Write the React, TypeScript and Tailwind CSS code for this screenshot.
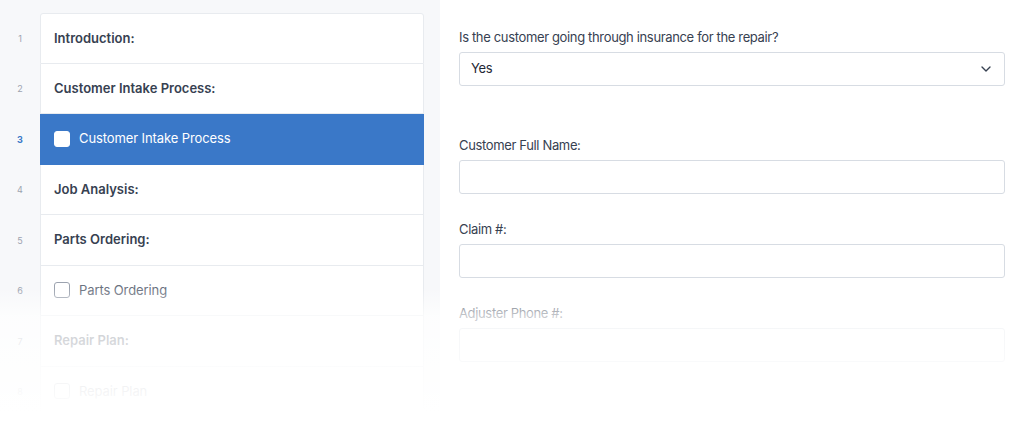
import { ChevronDown } from 'lucide-react';

const rows = [
  { n: 1, label: 'Introduction:', kind: 'heading' },
  { n: 2, label: 'Customer Intake Process:', kind: 'heading' },
  { n: 3, label: 'Customer Intake Process', kind: 'check', active: true },
  { n: 4, label: 'Job Analysis:', kind: 'heading' },
  { n: 5, label: 'Parts Ordering:', kind: 'heading' },
  { n: 6, label: 'Parts Ordering', kind: 'check' },
  { n: 7, label: 'Repair Plan:', kind: 'heading' },
  { n: 8, label: 'Repair Plan', kind: 'check' },
];

function App() {
  return (
    <div className="relative flex h-[437px] w-full overflow-hidden bg-white font-['Inter','Liberation_Sans',sans-serif] antialiased">
      {/* checklist */}
      <div className="w-[440px] shrink-0 bg-[#f7f8fa] pt-[13px]">
        {rows.map((row, i) => (
          <div key={row.n} className="flex h-[50.5px]">
            <div
              className={`flex w-[40px] items-center justify-center text-[9px] ${
                row.active ? 'font-bold text-[#3a78c8]' : 'text-[#9ca3af]'
              }`}
            >
              {row.n}
            </div>
            <div
              className={`flex w-[384px] items-center border-x border-b px-[13px] ${
                i === 0 ? 'rounded-t-[3px] border-t' : ''
              } ${row.active ? 'border-[#3a78c8] bg-[#3a78c8]' : 'border-[#e8ebef] bg-white'}`}
            >
              {row.kind === 'check' ? (
                <div className="flex items-center gap-[9px]">
                  <span
                    className={`h-[16px] w-[16px] rounded-[3px] border ${
                      row.active ? 'border-white bg-white' : 'border-[#9ca3af] bg-white'
                    }`}
                  />
                  <span className={`text-[13px] tracking-[-0.1px] ${row.active ? 'text-white' : 'text-[#6b7280]'}`}>
                    {row.label}
                  </span>
                </div>
              ) : (
                <span className="text-[13px] font-semibold text-[#374151]">{row.label}</span>
              )}
            </div>
          </div>
        ))}
      </div>

      {/* form */}
      <div className="flex-1 px-[19px] pt-[27px] text-[13px] tracking-[-0.35px] text-[#374151]">
        <label className="block h-[20px] leading-[20px]">Is the customer going through insurance for the repair?</label>
        <div className="mt-[5px] flex h-[34px] items-center justify-between rounded-[3px] border border-[#d7dce3] bg-white pl-[11px] pr-[10px] text-[#1f2937]">
          <span>Yes</span>
          <ChevronDown size={16} strokeWidth={2} className="text-[#374151]" />
        </div>

        <label className="mt-[49px] block h-[20px] leading-[20px]">Customer Full Name:</label>
        <div className="mt-[5px] h-[34px] rounded-[3px] border border-[#d7dce3] bg-white" />

        <label className="mt-[25px] block h-[20px] leading-[20px]">Claim #:</label>
        <div className="mt-[5px] h-[34px] rounded-[3px] border border-[#d7dce3] bg-white" />

        <label className="mt-[25px] block h-[20px] leading-[20px]">Adjuster Phone #:</label>
        <div className="mt-[5px] h-[34px] rounded-[3px] border border-[#d7dce3] bg-white" />
      </div>

      {/* fade out */}
      <div className="pointer-events-none absolute inset-x-0 top-[288px] bottom-0 bg-[linear-gradient(to_bottom,rgba(255,255,255,0)_0px,rgba(255,255,255,0.72)_28px,rgba(255,255,255,0.8)_55px,rgba(255,255,255,0.93)_105px,#fff_125px)]" />
    </div>
  );
}

export default App;
